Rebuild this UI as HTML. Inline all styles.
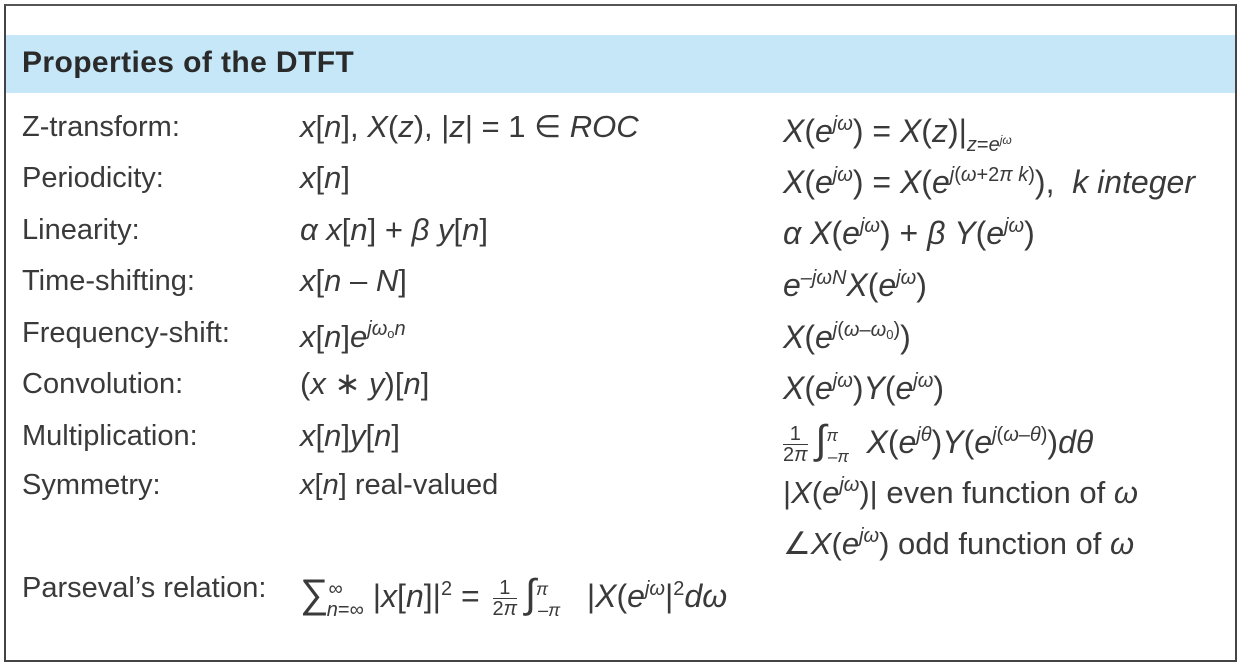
<!DOCTYPE html>
<html><head><meta charset="utf-8"><style>
html,body{margin:0;padding:0;background:#fff;}
body{width:1242px;height:668px;position:relative;overflow:hidden;font-family:"Liberation Sans",Arial,sans-serif;color:#3a3a3a;}
.box{position:absolute;left:4px;top:4px;width:1229px;height:654px;border:2px solid #444;border-top:2px solid #555;}
.hd{position:absolute;left:6px;top:35px;width:1229px;height:58px;background:#c6e7f8;}
.t{position:absolute;left:22px;top:48px;font-weight:bold;font-size:30px;line-height:30px;color:#2a2a2a;letter-spacing:0.4px;}
.r{position:absolute;font-size:29px;line-height:30px;white-space:nowrap;}
.m{font-size:31px;}
.m3{font-size:32px;}
.c1{left:22px;}
.c2{left:300px;}
.c3{left:783px;}
i{font-style:italic;}
sup{font-size:20px;vertical-align:12px;line-height:0;}
sub{font-size:20px;vertical-align:-9px;line-height:0;}
.fr{display:inline-block;vertical-align:middle;text-align:center;font-size:20px;line-height:20px;margin:0 8px 0 4px;}
.fr span{display:block;}
.fr span:first-child{border-bottom:1.5px solid #3a3a3a;}
.big{font-size:40px;}
</style></head><body>
<div class="box"></div>
<div class="hd"></div>
<div class="t">Properties of the DTFT</div>

<div class="r c1" style="top:112px">Z-transform:</div>
<div class="r c2 m" style="top:112px"><i>x</i>[<i>n</i>], <i>X</i>(<i>z</i>), |<i>z</i>| = 1 ∈ <i>ROC</i></div>
<div class="r c3 m3" style="top:116px"><i>X</i>(<i>e</i><sup><i>jω</i></sup>) = <i>X</i>(<i>z</i>)|<sub><i>z</i>=<i>e</i><sup style="font-size:12px;vertical-align:7px"><i>jω</i></sup></sub></div>

<div class="r c1" style="top:163px">Periodicity:</div>
<div class="r c2 m" style="top:163px"><i>x</i>[<i>n</i>]</div>
<div class="r c3 m3" style="top:167px"><i>X</i>(<i>e</i><sup><i>jω</i></sup>) = <i>X</i>(<i>e</i><sup><i>j</i>(<i>ω</i>+2<i>π k</i>)</sup>), &nbsp;<i>k integer</i></div>

<div class="r c1" style="top:215px">Linearity:</div>
<div class="r c2 m" style="top:215px"><i>α x</i>[<i>n</i>] + <i>β y</i>[<i>n</i>]</div>
<div class="r c3 m3" style="top:218px"><i>α X</i>(<i>e</i><sup><i>jω</i></sup>) + <i>β Y</i>(<i>e</i><sup><i>jω</i></sup>)</div>

<div class="r c1" style="top:266px">Time-shifting:</div>
<div class="r c2 m" style="top:266px"><i>x</i>[<i>n</i> – <i>N</i>]</div>
<div class="r c3 m3" style="top:270px"><i>e</i><sup><i>–jωN</i></sup><i>X</i>(<i>e</i><sup><i>jω</i></sup>)</div>

<div class="r c1" style="top:318px">Frequency-shift:</div>
<div class="r c2 m" style="top:322px"><i>x</i>[<i>n</i>]<i>e</i><sup><i>jω</i><sub style="font-size:13px;vertical-align:-3px">o</sub><i>n</i></sup></div>
<div class="r c3 m3" style="top:322px"><i>X</i>(<i>e</i><sup><i>j</i>(<i>ω</i>–<i>ω</i><sub style="font-size:13px;vertical-align:-3px">0</sub>)</sup>)</div>

<div class="r c1" style="top:369px">Convolution:</div>
<div class="r c2 m" style="top:369px">(<i>x</i> ∗ <i>y</i>)[<i>n</i>]</div>
<div class="r c3 m3" style="top:373px"><i>X</i>(<i>e</i><sup><i>jω</i></sup>)<i>Y</i>(<i>e</i><sup><i>jω</i></sup>)</div>

<div class="r c1" style="top:421px">Multiplication:</div>
<div class="r c2 m" style="top:421px"><i>x</i>[<i>n</i>]<i>y</i>[<i>n</i>]</div>
<div class="r c3 m3" style="top:424px"><span class="fr" style="margin-left:0"><span>1</span><span>2<i>π</i></span></span><i class="big">∫</i><sup style="font-size:17px"><i>π</i></sup><sub style="font-size:17px;margin-left:-10px"><i>–π</i></sub>&nbsp; <i>X</i>(<i>e</i><sup><i>jθ</i></sup>)<i>Y</i>(<i>e</i><sup><i>j</i>(<i>ω</i>–<i>θ</i>)</sup>)<i>dθ</i></div>

<div class="r c1" style="top:470px">Symmetry:</div>
<div class="r c2" style="top:470px"><i>x</i>[<i>n</i>] real-valued</div>
<div class="r c3 m" style="top:478px">|<i>X</i>(<i>e</i><sup><i>jω</i></sup>)| even function of <i>ω</i></div>
<div class="r c3 m" style="top:529px">∠<i>X</i>(<i>e</i><sup><i>jω</i></sup>) odd function of <i>ω</i></div>

<div class="r c1" style="top:573px">Parseval’s relation:</div>
<div class="r m3" style="left:300px;top:578px"><span class="big">∑</span><sup style="font-size:20px">∞</sup><sub style="font-size:20px;margin-left:-16px"><i>n</i>=∞</sub> |<i>x</i>[<i>n</i>]|<sup>2</sup> = <span class="fr"><span>1</span><span>2<i>π</i></span></span><i class="big">∫</i><sup style="font-size:18px"><i>π</i></sup><sub style="font-size:18px;margin-left:-10px"><i>–π</i></sub>&nbsp;&nbsp; |<i>X</i>(<i>e</i><sup><i>jω</i></sup>|<sup>2</sup><i>dω</i></div>
</body></html>
